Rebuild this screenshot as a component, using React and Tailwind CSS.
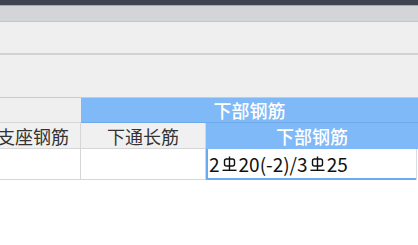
import React from "react";

const cjk = { fontFamily: '"Noto Sans CJK SC", "Noto Sans", sans-serif' };

// HRB400 rebar symbol, drawn since no font carries it
const RebarIII = () => (
  <svg width="15" height="16" viewBox="0 0 15 16" className="mx-[2px] inline-block">
    <rect x="2.5" y="3" width="10" height="7" rx="2" fill="none" stroke="#111" strokeWidth="1.4" />
    <line x1="7.5" y1="0.5" x2="7.5" y2="14.5" stroke="#111" strokeWidth="1.4" />
    <line x1="0.5" y1="14.3" x2="14.5" y2="14.3" stroke="#111" strokeWidth="1.4" />
  </svg>
);

export default function App() {
  return (
    <div className="w-[418px] h-[245px] overflow-hidden bg-white flex flex-col" style={cjk}>
      {/* window chrome */}
      <div className="h-[5px] bg-[#3e4550] shrink-0" />
      <div className="h-[17px] bg-[#d4d5d9] border-t border-[#a9abb0] border-b border-b-[#c4c5c9] shrink-0" />
      <div className="h-[33px] bg-[#efefef] border-b-2 border-[#d2d2d2] shrink-0" />
      <div className="h-[43px] bg-[#efefef] border-b border-[#c9cacd] shrink-0" />

      {/* grid */}
      <div className="flex flex-col text-[18px] leading-none">
        <div className="flex h-[25px]">
          <div className="w-[81px] bg-[#efefef] border-b border-[#d6d6d6]" />
          <div className="flex-1 bg-[#7fb9f7] border-b border-[#6ea9e9] flex items-center justify-center text-white font-medium">
            下部钢筋
          </div>
        </div>
        <div className="flex h-[26px]">
          <div className="w-[81px] shrink-0 bg-[#f0f0f0] border-r border-b border-[#d6d6d6] flex items-center justify-end pr-[11px] text-[#333] whitespace-nowrap">
            支座钢筋
          </div>
          <div className="w-[125px] shrink-0 bg-[#f0f0f0] border-r border-b border-[#d6d6d6] flex items-center justify-center text-[#333]">
            下通长筋
          </div>
          <div className="flex-1 bg-[#7fb9f7] flex items-center justify-center text-white font-medium">
            下部钢筋
          </div>
        </div>
        <div className="flex h-[31px]">
          <div className="w-[81px] shrink-0 bg-white border-r border-b border-[#d6d6d6]" />
          <div className="w-[125px] shrink-0 bg-white border-r border-b border-[#d6d6d6]" />
          <div className="w-[210px] shrink-0 bg-white border-l-2 border-b-2 border-[#6aaaf0] flex items-center pl-[1px] text-[19px] text-[#111] whitespace-nowrap">
            2<RebarIII />20(-2)/3<RebarIII />25
          </div>
          <div className="flex-1 border-l border-[#d8dde6]" />
        </div>
      </div>
    </div>
  );
}
